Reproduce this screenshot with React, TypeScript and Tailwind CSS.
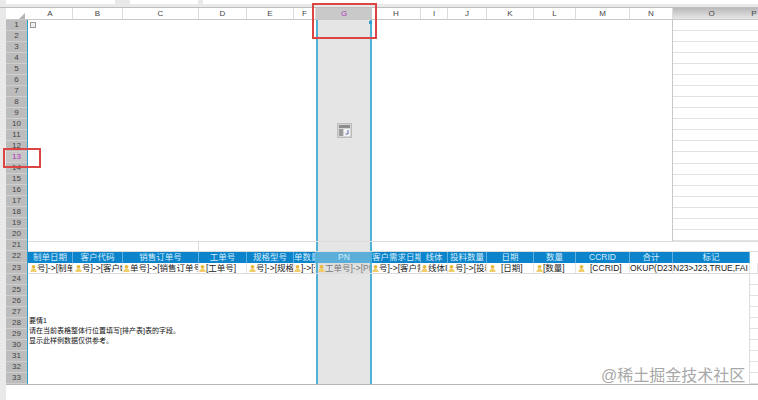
const rowNumbers = Array.from({ length: 33 }, (_, i) => i + 1);

const columns = [
  { label: "A", head: "制单日期", data: "号]->[制单", icon: true },
  { label: "B", head: "客户代码", data: "号]->[客户t", icon: true },
  { label: "C", head: "销售订单号", data: "单号]->[销售订单号", icon: true },
  { label: "D", head: "工单号", data: "[工单号]", icon: true },
  { label: "E", head: "规格型号", data: "号]->[规格型", icon: true },
  { label: "F", head: "单数量", data: "]->[订", icon: true },
  { label: "G", head: "PN", data: "工单号]->[PN", icon: true },
  { label: "H", head: "客户需求日期", data: "号]->[客户需求", icon: true },
  { label: "I", head: "线体", data: "线体I", icon: true },
  { label: "J", head: "投料数量", data: "号]->[投料", icon: true },
  { label: "K", head: "日期", data: "[日期]", icon: true, gap: true },
  { label: "L", head: "数量", data: "[数量]", icon: true },
  { label: "M", head: "CCRID", data: "[CCRID]", icon: true, gap: true },
  { label: "N", head: "合计", data: "OKUP(D23", icon: false },
  { label: "O", head: "标记", data: "N23>J23,TRUE,FAI", icon: false },
  { label: "P", head: "", data: "", icon: false },
];

const Person = () => (
  <svg viewBox="0 0 8 9" className="h-[9px] w-[7px] shrink-0">
    <circle cx="4" cy="2.6" r="2.2" fill="#e8b83c" />
    <path d="M0.5 8.5c0-2.6 1.4-3.6 3.5-3.6s3.5 1 3.5 3.6z" fill="#f0cc6a" />
  </svg>
);

const ColumnHeaders = () => (
  <div className="grid h-[11.5px] grid-cols-[21px_1px_45px_50px_76px_48px_47px_22px_56px_49px_27px_39px_47px_42px_54px_43px_77px_8px] border-b border-[#c8c8c8] bg-white text-[8px] leading-[11px] text-[#444]">
    <div className="flex items-end justify-end pr-[2px]">
      <div className="h-0 w-0 border-b-[6px] border-l-[6px] border-b-[#b4b4b4] border-l-transparent" />
    </div>
    <div />
    {columns.map((c) => (
      <div
        key={c.label}
        className={
          c.label === "G"
            ? "bg-[#c9c9c9] text-center text-[#b03ab8]"
            : c.label === "O" || c.label === "P"
              ? "bg-gradient-to-b from-[#b9b9b9] to-[#e8e8e8] text-center"
              : "border-r border-[#dcdcdc] text-center"
        }
      >
        {c.label}
      </div>
    ))}
  </div>
);

const SelectedColumn = ({ children }: { children?: React.ReactNode }) => (
  <div className="relative flex items-center justify-center border-x-2 border-[#4fb1d6] bg-[#e5e5e5]">
    {children}
  </div>
);

const GridLines = ({ count }: { count: number }) => (
  <div className="flex flex-col">
    {Array.from({ length: count }, (_, i) => (
      <div key={i} className="flex-1 border-b border-[#e2e2e2]" />
    ))}
  </div>
);

const FloatingIcon = () => (
  <svg viewBox="0 0 15 15" className="h-[15px] w-[15px]">
    <rect x="0.5" y="0.5" width="14" height="14" fill="#d4d4d4" stroke="#bdbdbd" />
    <rect x="2" y="2" width="11" height="3" fill="#8c8c8c" />
    <rect x="2" y="6" width="4" height="7" fill="#9b9b9b" />
    <rect x="7" y="6" width="6" height="7" fill="#f4f4f4" />
    <path d="M11 7v4H8.5" fill="none" stroke="#5d6bb5" strokeWidth="1" />
  </svg>
);

export default function App() {
  return (
    <div className="relative h-[400px] w-[758px] overflow-hidden bg-[#e9e9e9] font-['Liberation_Sans','Noto_Sans_CJK_SC',sans-serif]">
      {/* formula bar */}
      <div className="flex h-[4px] gap-[5px] pl-[6px]">
        <div className="w-[109px] bg-white" />
        <div className="ml-[10px] w-[68px] bg-white" />
        <div className="flex-1 bg-white" />
      </div>
      <div className="h-[4px] border-b border-[#bdbdbd]" />

      {/* sheet */}
      <div className="ml-[6px] bg-white">
        <ColumnHeaders />
        <div className="flex h-[365.5px] border-b border-[#b5b5b5]">
          <div className="grid w-[21px] shrink-0 grid-rows-[repeat(33,minmax(0,1fr))] bg-[#bcbcbc]">
            {rowNumbers.map((n) => (
              <div
                key={n}
                className={`flex min-h-0 items-center justify-center overflow-hidden border-b border-[#cfcfcf] text-[8px] leading-none ${
                  n === 13 ? "bg-[#c6c6c6] text-[#b02fc0]" : "text-[#444]"
                }`}
              >
                {n}
              </div>
            ))}
          </div>
          <div className="flex min-w-0 flex-1 flex-col border-l border-[#2f9fd0]">
            {/* rows 1-20 */}
            <div className="grid h-[221.6px] grid-cols-[288px_56px_301px_85px]">
              <div className="p-[2px]">
                <div className="h-[6px] w-[6px] border border-[#9a9a9a] bg-[#efefef]" />
              </div>
              <SelectedColumn>
                <FloatingIcon />
                <div className="absolute right-[-2px] top-[1px] h-[3px] w-[3px] bg-[#2f9fd0]" />
              </SelectedColumn>
              <div className="border-r border-[#c8c8c8]" />
              <GridLines count={20} />
            </div>

            {/* row 21 */}
            <div className="grid h-[11px] grid-cols-[171px_117px_56px_301px_85px] border-y border-[#dddddd]">
              <div className="border-r border-[#dddddd]" />
              <div />
              <SelectedColumn />
              <div />
              <div />
            </div>

            {/* row 22 */}
            <div className="grid h-[11.1px] grid-cols-[45px_50px_76px_48px_47px_22px_56px_49px_27px_39px_47px_42px_54px_43px_77px_8px] text-[8.5px] leading-[11px] text-[#d6ecfa]">
              {columns.map((c) => (
                <div
                  key={c.label}
                  className={
                    c.label === "G"
                      ? "border-x-2 border-[#4fb1d6] bg-[#5aaed8] text-center"
                      : c.label === "P"
                        ? "bg-white"
                        : "overflow-hidden whitespace-nowrap border-r border-[#5fb0e0] bg-[#0b84cb] text-center"
                  }
                >
                  {c.head}
                </div>
              ))}
            </div>

            {/* row 23 */}
            <div className="grid h-[11.1px] grid-cols-[45px_50px_76px_48px_47px_22px_56px_49px_27px_39px_47px_42px_54px_43px_77px_8px] border-b border-[#dcdcdc] text-[8.5px] leading-[11px] text-[#222]">
              {columns.map((c) => (
                <div
                  key={c.label}
                  className={`flex items-center overflow-hidden whitespace-nowrap ${c.gap ? "gap-[5px]" : ""} ${
                    c.label === "G"
                      ? "border-x-2 border-[#4fb1d6] bg-[#e0e0e0] text-[#777]"
                      : "border-r border-[#e6e6e6]"
                  } ${c.label === "A" || c.label === "B" || c.label === "E" || c.label === "K" || c.label === "L" || c.label === "M" ? "pl-[2px]" : ""}`}
                >
                  {c.icon && <Person />}
                  <span>{c.data}</span>
                </div>
              ))}
            </div>

            {/* rows 24-33 */}
            <div className="grid flex-1 grid-cols-[288px_56px_378px_8px]">
              <div className="pl-[1px] pt-[42px] text-[7px] leading-[9.7px] text-[#111]">
                <p>要情1</p>
                <p className="whitespace-nowrap">请在当前表格整体行位置填写[排产表]表的字段。</p>
                <p className="whitespace-nowrap">显示此样例数据仅供参考。</p>
              </div>
              <SelectedColumn />
              <div className="border-r border-[#dddddd]" />
              <GridLines count={10} />
            </div>
          </div>
        </div>
      </div>
      <div className="ml-[6px] h-full bg-white" />

      {/* red annotation boxes */}
      <div className="absolute left-[312px] top-[3px] h-[36px] w-[65px] border-2 border-[#dd4444]" />
      <div className="absolute left-[3px] top-[148px] h-[20px] w-[38px] border-2 border-[#dd4444]" />

      {/* watermark */}
      <div className="absolute left-[601px] top-[366px] whitespace-nowrap text-[16px] leading-[20px] text-[#a8a8a8]">
        @稀土掘金技术社区
      </div>
    </div>
  );
}
